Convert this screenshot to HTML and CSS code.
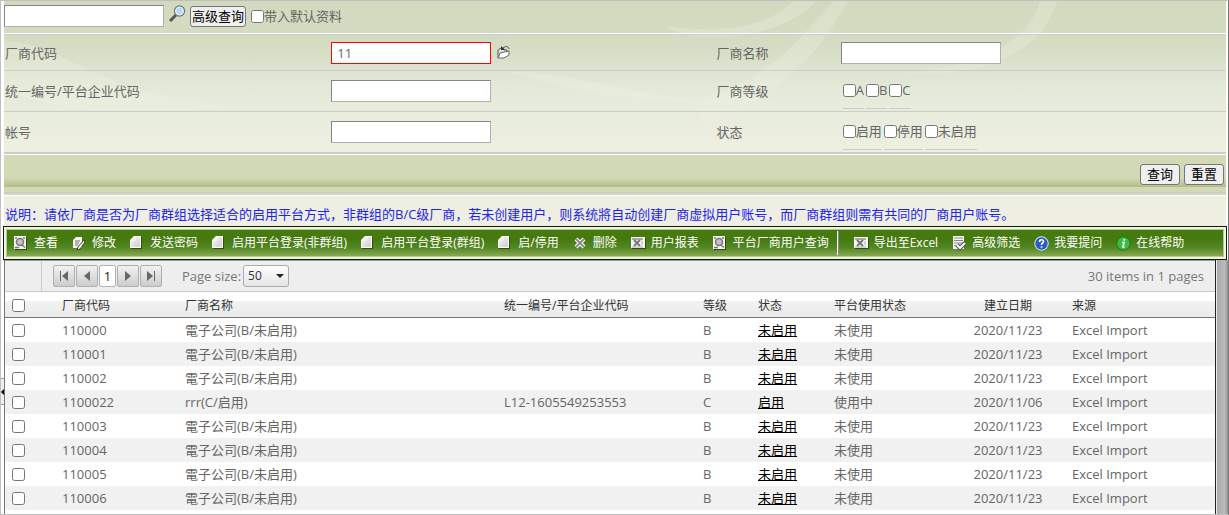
FILE: index.html
```
<!DOCTYPE html>
<html lang="zh-CN">
<head>
<meta charset="utf-8">
<title>厂商用户查询</title>
<link rel="stylesheet" href="styles.css">
</head>
<body>
<svg class="sprite" aria-hidden="true">
  <defs>
    <linearGradient id="paper" x1="0" y1="0" x2="1" y2="1"><stop offset="0" stop-color="#fff"/><stop offset="0.4" stop-color="#e6e6e6"/><stop offset="1" stop-color="#d0d0d0"/></linearGradient>
    <symbol id="i-view" viewBox="0 0 15 15"><path d="M1 1h12v13H1z" fill="#2c4a0c"/><path d="M0 0h12v13H0z" fill="#f4f4f4"/><path d="M1 1h2v2H1zM9 1h2v2H9z" fill="#999"/><circle cx="6" cy="6" r="3.500" fill="#c4c4c4" stroke="#777" stroke-width="1.500"/><path d="M8 9l3 2.500M1 11.500h4" stroke="#777" stroke-width="1.500"/></symbol>
    <symbol id="i-edit" viewBox="0 0 15 15"><path d="M4 1h6v11H1V4z" fill="#f4f4f4"/><path d="M3 5h5M3 7h4M3 9h3" stroke="#777"/><path d="M12 4L6 11l-1 3 3-1 5-7z" fill="#fff" stroke="#33480f"/></symbol>
    <symbol id="i-page" viewBox="0 0 15 15"><path d="M5 1h7v12H1V4z" fill="#30500c"/><path d="M4 0h7v12H0V4z" fill="#fff"/><path d="M4.500 1H10v10H1V4.500h3.500z" fill="url(#paper)"/></symbol>
    <symbol id="i-del" viewBox="0 0 15 15"><path d="M3 3l8 8M11 3l-8 8" stroke="#fff" stroke-width="4"/><path d="M3 3l8 8M11 3l-8 8" stroke="#8a8a8a" stroke-width="2"/></symbol>
    <symbol id="i-xls" viewBox="0 0 15 15"><path d="M1 2h14v11H1z" fill="#30500c"/><path d="M0 1h14v11H0z" fill="#f7f7f7"/><path d="M1 2h11v2H1z" fill="#aaa"/><path d="M3 4l6 6M9 4l-6 6" stroke="#777" stroke-width="2"/><path d="M10 6h2M10 8h2M1 11h11" stroke="#aaa"/></symbol>
    <symbol id="i-filter" viewBox="0 0 15 15"><path d="M1 0h11v13H1z" fill="#f4f4f4"/><path d="M2 2h9M2 4.500h9M2 7h9M2 9.500h4" stroke="#888"/><path d="M5 9l3 3 5-5" fill="none" stroke="#444" stroke-width="4"/><path d="M5 9l3 3 5-5" fill="none" stroke="#fff" stroke-width="2.200"/></symbol>
    <symbol id="i-ask" viewBox="0 0 15 15"><circle cx="7.500" cy="7.500" r="7.200" fill="#dfe8f8"/><circle cx="7.500" cy="7.500" r="6.200" fill="#2a5ccc"/><path d="M5.500 6c0-3 4-3 4-.5 0 1.500-2 1.500-2 3.500M7.500 10.200v1.500" fill="none" stroke="#fff" stroke-width="1.600"/></symbol>
    <symbol id="i-info" viewBox="0 0 15 15"><circle cx="7.500" cy="7.500" r="7.200" fill="#1f7a20"/><circle cx="7.500" cy="7.500" r="6.200" fill="#3cbc3c"/><path d="M8.500 3L8 4.800M6 6.500h2L7 11h1.500" fill="none" stroke="#fff" stroke-width="1.700"/></symbol>
  </defs>
</svg>

<div class="page">
  <div class="splitter"><span class="handle"></span></div>
  <div class="content">
    <section class="search">
      <svg class="swirl" viewBox="0 0 1222 153" preserveAspectRatio="none" aria-hidden="true">
        <path d="M660 25C730 35 770 20 790 0h22C790 25 740 42 680 34z"/>
        <path d="M690 100C770 80 800 30 830 0h14C810 60 780 90 700 125z"/>
        <path d="M900 72C980 65 1025 40 1036 0h17C1040 50 980 78 900 72z"/>
        <path d="M0 40c60 0 100 60 230 64C130 120 60 110 0 90zM500 70c60 0 110 20 200 30-80 0-130-10-200-30z"/>
      </svg>
      <form class="quick">
        <input class="text" type="text" aria-label="快速查询">
        <button class="icon-btn" type="button" aria-label="搜索">
          <svg width="17" height="17" viewBox="0 0 17 17"><path d="M1 16l6-6" stroke="#555" stroke-width="3"/><circle cx="10.500" cy="6" r="5" fill="#b8dcf6" stroke="#777" stroke-width="1.500"/><circle cx="10.500" cy="6" r="4" fill="none" stroke="#f2f2f2"/></svg>
        </button>
        <button class="btn tight" type="button">高级查询</button>
        <label class="check"><input type="checkbox">带入默认资料</label>
      </form>
      <form class="fields">
        <div class="row first">
          <label for="code">厂商代码</label>
          <div class="cell"><input class="text required" id="code" type="text" value="11">
            <button class="icon-btn" type="button" aria-label="选择厂商">
              <svg width="15" height="15" viewBox="0 0 15 15"><path d="M2 13V5l3-2h2l1 2h3v2" fill="#e5e5e5" stroke="#555"/><path d="M2 13l2-5 9-2v4l-5 3z" fill="#fff" stroke="#666"/><path d="M13 4c0-3-4-3-6-1" fill="none" stroke="#555"/><path d="M5 1v4h4z" fill="#333"/></svg>
            </button></div>
          <label for="name">厂商名称</label>
          <div class="cell"><input class="text" id="name" type="text"></div>
        </div>
        <div class="row">
          <label for="unified">统一编号/平台企业代码</label>
          <div class="cell"><input class="text" id="unified" type="text"></div>
          <span>厂商等级</span>
          <div class="cell checks"><label class="check"><input type="checkbox">A</label><label class="check"><input type="checkbox">B</label><label class="check"><input type="checkbox">C</label></div>
        </div>
        <div class="row">
          <label for="account">帐号</label>
          <div class="cell"><input class="text" id="account" type="text"></div>
          <span>状态</span>
          <div class="cell checks"><label class="check"><input type="checkbox">启用</label><label class="check"><input type="checkbox">停用</label><label class="check"><input type="checkbox">未启用</label></div>
        </div>
      </form>
    </section>
    <div class="actions"><button class="btn" type="button">查询</button><button class="btn" type="button">重置</button></div>
    <div class="band-foot"></div>
    <p class="note">说明：请依厂商是否为厂商群组选择适合的启用平台方式，非群组的B/C级厂商，若未创建用户，则系统將自动创建厂商虚拟用户账号，而厂商群组则需有共同的厂商用户账号。</p>
    <nav class="toolbar">
      <button type="button"><svg><use href="#i-view"/></svg>查看</button>
      <button type="button"><svg><use href="#i-edit"/></svg>修改</button>
      <button type="button"><svg><use href="#i-page"/></svg>发送密码</button>
      <button type="button"><svg><use href="#i-page"/></svg>启用平台登录(非群组)</button>
      <button type="button"><svg><use href="#i-page"/></svg>启用平台登录(群组)</button>
      <button type="button"><svg><use href="#i-page"/></svg>启/停用</button>
      <button type="button"><svg><use href="#i-del"/></svg>删除</button>
      <button type="button"><svg><use href="#i-xls"/></svg>用户报表</button>
      <button type="button"><svg><use href="#i-view"/></svg>平台厂商用户查询</button>
      <span class="sep"></span>
      <button type="button"><svg><use href="#i-xls"/></svg>导出至Excel</button>
      <button type="button"><svg><use href="#i-filter"/></svg>高级筛选</button>
      <button type="button"><svg><use href="#i-ask"/></svg>我要提问</button>
      <button type="button"><svg><use href="#i-info"/></svg>在线帮助</button>
    </nav>
    <div class="grid-wrap">
      <div class="grid">
        <div class="pager">
          <span class="gutter"></span>
          <div class="pages">
            <button type="button" aria-label="首页"><svg viewBox="0 0 10 10"><path d="M1 0h1v10H1zM9 0v10L3 5z"/></svg></button>
            <button type="button" aria-label="上一页"><svg viewBox="0 0 10 10"><path d="M8 0v10L2 5z"/></svg></button>
            <button type="button" class="current">1</button>
            <button type="button" aria-label="下一页"><svg viewBox="0 0 10 10"><path d="M2 0v10l6-5z"/></svg></button>
            <button type="button" aria-label="末页"><svg viewBox="0 0 10 10"><path d="M8 0h1v10H8zM1 0v10l6-5z"/></svg></button>
          </div>
          <label for="size">Page size:</label>
          <span class="select"><select id="size"><option>50</option></select></span>
          <span class="total">30 items in 1 pages</span>
        </div>
        <table>
          <colgroup><col class="c-check"><col class="c-code"><col class="c-name"><col class="c-unified"><col class="c-grade"><col class="c-state"><col class="c-use"><col class="c-date"><col class="c-source"></colgroup>
          <thead><tr><th><input type="checkbox" aria-label="全选"></th><th>厂商代码</th><th>厂商名称</th><th>统一编号/平台企业代码</th><th>等级</th><th>状态</th><th>平台使用状态</th><th class="mid">建立日期</th><th>来源</th></tr></thead>
          <tbody>
            <tr><td><input type="checkbox" aria-label="110000"></td><td>110000</td><td>電子公司(B/未启用)</td><td></td><td>B</td><td><a href="#">未启用</a></td><td>未使用</td><td class="mid">2020/11/23</td><td>Excel Import</td></tr>
            <tr><td><input type="checkbox" aria-label="110001"></td><td>110001</td><td>電子公司(B/未启用)</td><td></td><td>B</td><td><a href="#">未启用</a></td><td>未使用</td><td class="mid">2020/11/23</td><td>Excel Import</td></tr>
            <tr><td><input type="checkbox" aria-label="110002"></td><td>110002</td><td>電子公司(B/未启用)</td><td></td><td>B</td><td><a href="#">未启用</a></td><td>未使用</td><td class="mid">2020/11/23</td><td>Excel Import</td></tr>
            <tr><td><input type="checkbox" aria-label="1100022"></td><td>1100022</td><td>rrr(C/启用)</td><td>L12-1605549253553</td><td>C</td><td><a href="#">启用</a></td><td>使用中</td><td class="mid">2020/11/06</td><td>Excel Import</td></tr>
            <tr><td><input type="checkbox" aria-label="110003"></td><td>110003</td><td>電子公司(B/未启用)</td><td></td><td>B</td><td><a href="#">未启用</a></td><td>未使用</td><td class="mid">2020/11/23</td><td>Excel Import</td></tr>
            <tr><td><input type="checkbox" aria-label="110004"></td><td>110004</td><td>電子公司(B/未启用)</td><td></td><td>B</td><td><a href="#">未启用</a></td><td>未使用</td><td class="mid">2020/11/23</td><td>Excel Import</td></tr>
            <tr><td><input type="checkbox" aria-label="110005"></td><td>110005</td><td>電子公司(B/未启用)</td><td></td><td>B</td><td><a href="#">未启用</a></td><td>未使用</td><td class="mid">2020/11/23</td><td>Excel Import</td></tr>
            <tr><td><input type="checkbox" aria-label="110006"></td><td>110006</td><td>電子公司(B/未启用)</td><td></td><td>B</td><td><a href="#">未启用</a></td><td>未使用</td><td class="mid">2020/11/23</td><td>Excel Import</td></tr>
          </tbody>
        </table>
      </div>
      <div class="scrollbar"></div>
    </div>
  </div>
</div>
</body>
</html>
```
FILE: styles.css
```
* { box-sizing: border-box; }
body {
  margin: 0;
  font: 13px/18px "Open Sans", "Noto Sans CJK SC", sans-serif;
  color: #666;
  background: #fff;
}
button, input, select { font: inherit; margin: 0; }
input[type="checkbox"] { width: 13px; height: 13px; flex: none; }
.sprite { position: absolute; width: 0; height: 0; }

.page {
  display: flex;
  min-height: 100vh;
  border: 1px solid #c0c0c0;
  border-right: 1px solid #777;
}
.splitter { position: relative; width: 3px; flex: none; }
.handle {
  position: absolute;
  top: 377px;
  left: 0;
  width: 3px;
  height: 27px;
  border: solid #999;
  border-width: 1px 0;
  background: #eee;
}
.handle::after {
  content: "";
  position: absolute;
  top: 10px;
  left: 0;
  border: 3px solid transparent;
  border-left: 0;
  border-right-color: #000;
}
.content { flex: 1; min-width: 0; display: flex; flex-direction: column; }

.search { position: relative; margin-right: 2px; background: linear-gradient(#d1dabe 0, #d4dcc3 45px, #e4eada 90px, #edefe1 145px); }
.swirl { position: absolute; inset: 0; width: 100%; height: 100%; fill: #f0f2e4; opacity: 0.3; }
.quick {
  position: relative;
  display: flex;
  align-items: center;
  height: 34px;
  padding-bottom: 3px;
  border-bottom: 1px solid #ccc;
  box-shadow: inset 0 -1px #fff;
}
.text {
  width: 160px;
  height: 22px;
  padding: 1px 5px;
  border: 1px solid #b0b0b0;
  border-top-color: #858585;
  border-left-color: #858585;
  background: #fff;
  color: #666;
}
.text.required { border-color: #f00; }
.icon-btn { display: flex; padding: 0; margin: 0 5px; border: 0; background: none; }
.quick .icon-btn { padding-bottom: 6px; margin-right: 4px; }
.btn {
  height: 21px;
  padding: 0 6px;
  border: 1px solid #767676;
  border-radius: 3px;
  background: #efefef;
  color: #000;
  line-height: 18px;
  white-space: nowrap;
}
.tight { padding: 0 1px; margin-right: 5px; }
.check { display: flex; align-items: center; white-space: nowrap; }
.fields { position: relative; }
.row {
  display: grid;
  grid-template-columns: 327fr 384fr 125fr 385fr;
  align-items: center;
  height: 41px;
  border-bottom: 1px solid #ccc;
}
.row > label, .row > span { padding-left: 1px; }
.row:last-child { height: 42px; border-bottom-width: 2px; }
.row.first { height: 36px; }
.cell { display: flex; align-items: center; }
.checks { gap: 2px; padding-left: 2px; align-self: end; }
.checks .check { height: 33px; padding-bottom: 4px; margin-bottom: 2px; border-bottom: 1px solid #ccc; }

.actions {
  display: flex;
  justify-content: flex-end;
  align-items: center;
  gap: 4px;
  height: 33px;
  margin-right: 2px;
  padding: 6px 2px 0 0;
  border-top: 1px solid #fff;
  background: linear-gradient(#d2dab5 70%, #b4bd88);
}
.band-foot { height: 9px; margin-right: 2px; border-bottom: 1px solid #fff; background: linear-gradient(#d2dab5 5px, #c9c9c9 5px, #c9c9c9 6px, #d2dab5 6px); }
.note {
  margin: 0 2px 0 0;
  padding: 9px 0 3px 1px;
  background: #eeefe2;
  color: #22e;
  white-space: nowrap;
}
.toolbar {
  display: flex;
  align-items: center;
  gap: 14px;
  height: 34px;
  margin-left: -1px;
  margin-right: 1px;
  padding: 0 8px 0 10px;
  border: 1px solid #111c08;
  box-shadow: inset 0 0 0 2px #eef4dd, inset 0 0 0 3px #b5cb8b;
  background: linear-gradient(#467a10 40%, #538724 65%, #86a84f 90%);
}
.toolbar button {
  display: flex;
  align-items: center;
  gap: 5px;
  padding: 0;
  border: 0;
  background: none;
  color: #fff;
  font-size: 12px;
  white-space: nowrap;
}
.toolbar svg { width: 15px; height: 15px; flex: none; }
.sep { width: 2px; height: 24px; margin: 0 1px 0 -6px; border-left: 1px solid #fff; background: #889; }

.grid-wrap { display: flex; flex: 1; }
.grid { flex: 1; min-width: 0; border-left: 1px solid #777; border-right: 1px solid #222; }
.scrollbar { width: 12px; background: linear-gradient(90deg, #eee 1px, #aaa 1px, #bbb 9px, #909090); }
.pager {
  display: flex;
  align-items: center;
  height: 32px;
  border-top: 1px solid #999;
  border-bottom: 1px solid #c8c8c8;
  background: #eee;
  color: #777;
}
.gutter { width: 37px; height: 100%; border-right: 1px solid #ccc; }
.pages { display: flex; gap: 1px; margin: 0 20px 0 11px; }
.pages button {
  display: flex;
  align-items: center;
  justify-content: center;
  width: 22px;
  height: 22px;
  padding: 0;
  border: 1px solid #b0b0b0;
  border-radius: 2px;
  background: linear-gradient(#f2f2f2, #ccc);
  color: #222;
}
.pages .current { width: 17px; background: #fff; }
.pages svg { width: 10px; height: 10px; fill: #666; }
.select { position: relative; margin-left: 2px; }
.select select {
  display: block;
  appearance: none;
  width: 46px;
  height: 22px;
  padding: 0 4px;
  border: 1px solid #aaa;
  border-radius: 3px;
  background: linear-gradient(#fff, #e4e4e4);
  color: #333;
  font-size: 12px;
}
.select::after {
  content: "";
  position: absolute;
  top: 9px;
  right: 5px;
  border: 4px solid transparent;
  border-bottom: 0;
  border-top-color: #222;
  pointer-events: none;
}
.total { margin-left: auto; padding-right: 11px; }

table { width: 100%; table-layout: fixed; border-collapse: separate; border-spacing: 0; }
th, td { height: 24px; padding: 0 7px; text-align: left; font-weight: normal; white-space: nowrap; }
th { height: 26px; padding-top: 2px; border-bottom: 1px solid #777; background: linear-gradient(#fff 9px, #f2f2f2 9px, #eaeaea); color: #333; font-size: 12px; }
th input, td input { display: block; }
.mid { text-align: center; }
tbody tr:nth-child(even) { background: #f1f1f1; }
td a { color: #000; text-decoration: underline; }
.c-check { width: 50px; }
.c-code { width: 123px; }
.c-name { width: 319px; }
.c-unified { width: 199px; }
.c-grade { width: 55px; }
.c-state { width: 76px; }
.c-use { width: 124px; }
.c-date { width: 114px; }
.c-source { width: 150px; }
```
